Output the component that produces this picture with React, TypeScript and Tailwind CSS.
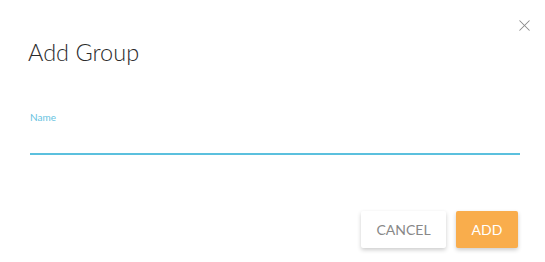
import { X } from "lucide-react"

export default function App() {
  return (
    <div className="relative w-[545px] h-[262px] bg-white font-['Lato','Noto_Sans',sans-serif]">
      <button className="absolute top-[16px] left-[515px] text-[#8a8a8a]">
        <X className="h-[19px] w-[19px]" strokeWidth={1.3} />
      </button>

      <div className="pt-[38px] pl-[28px]">
        <h2 className="text-[23.5px] leading-[29px] font-light text-[#2b2b2b]">Add Group</h2>
      </div>

      <div className="mt-[44px] ml-[30px] w-[490px]">
        <label className="block text-[10px] leading-[12px] text-[#66c3df]">Name</label>
        <input
          type="text"
          className="block w-full h-[32px] border-b-2 border-[#5bc0de] bg-transparent text-[14px] text-[#333] outline-none"
        />
      </div>

      <div className="mt-[56px] flex justify-end gap-[10px] pr-[27px]">
        <button className="h-[37px] w-[85px] rounded-[2px] bg-white text-[14px] text-[#888888] shadow-[0_2px_4px_rgba(0,0,0,0.2)]">
          CANCEL
        </button>
        <button className="h-[37px] w-[62px] rounded-[2px] bg-[#f9ad4c] text-[14px] text-white shadow-[0_2px_4px_rgba(0,0,0,0.2)]">
          ADD
        </button>
      </div>
    </div>
  )
}
